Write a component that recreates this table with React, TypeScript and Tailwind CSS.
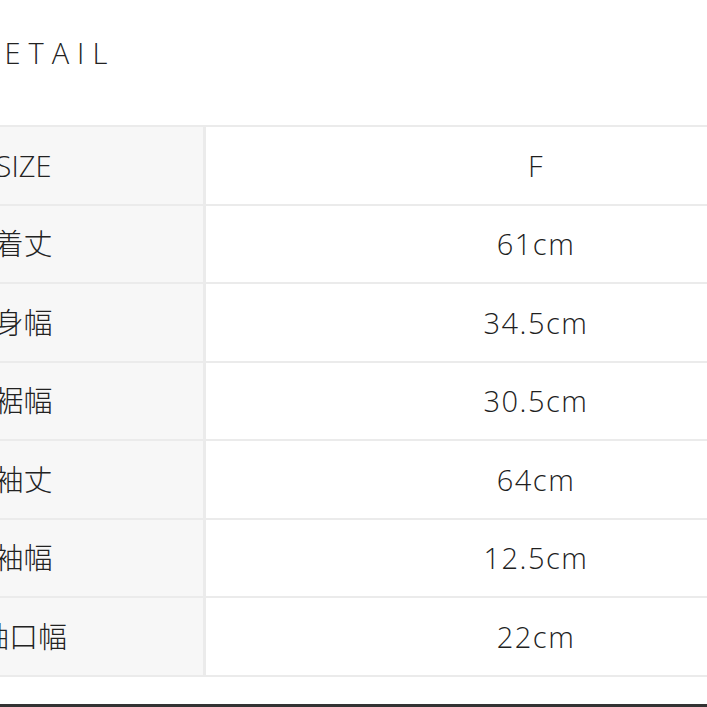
import React from "react";

const rows: [string, string][] = [
  ["SIZE", "F"],
  ["着丈", "61cm"],
  ["身幅", "34.5cm"],
  ["裾幅", "30.5cm"],
  ["袖丈", "64cm"],
  ["袖幅", "12.5cm"],
  ["袖口幅", "22cm"],
];

export default function App() {
  return (
    <div className="relative w-[707px] h-[707px] overflow-hidden bg-white text-[#333]">
      <div className="flex flex-col ml-[-160px] w-[1026px]">
        <div className="h-[125px] pl-[136px] pt-[33px]">
          <div
            className="text-[29px] leading-[40px] tracking-[8px] font-light text-[#222]"
            style={{ fontFamily: '"Open Sans", "Noto Sans", sans-serif' }}
          >
            DETAIL
          </div>
        </div>
        <div className="flex flex-col border-t-2 border-[#ebebeb]">
          {rows.map(([k, v]) => (
            <div key={k} className="flex h-[78.5px] border-b-2 border-[#ebebeb]">
              <div
                className="w-[366px] pl-[4px] bg-[#f7f7f7] border-r-[3px] border-[#ebebeb] flex items-center justify-center text-[29px] font-light text-[#222]"
                style={{ fontFamily: '"Open Sans", "Noto Sans CJK JP", sans-serif' }}
              >
                {k}
              </div>
              <div
                className="flex-1 flex items-center justify-center text-[29px] font-light tracking-[1.5px] text-[#1f1f1f]"
                style={{ fontFamily: '"Open Sans", "Noto Sans", sans-serif' }}
              >
                {v}
              </div>
            </div>
          ))}
        </div>
      </div>
      <div className="absolute left-0 right-0 bottom-0 h-[3px] bg-[#333]" />
    </div>
  );
}
